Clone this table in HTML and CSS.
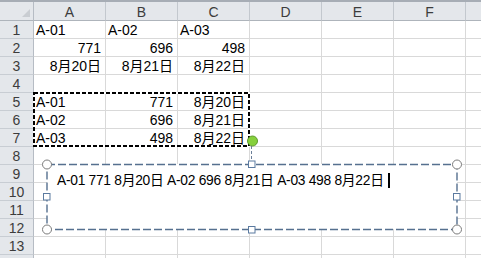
FILE: index.html
```html
<!DOCTYPE html>
<html lang="ja">
<head>
<meta charset="utf-8">
<link rel="stylesheet" href="styles.css">
</head>
<body>
<div class="sheet">
  <div class="topbar"></div>
  <div class="row head">
    <div class="rh corner"><span class="tri"></span></div>
    <div class="c">A</div><div class="c">B</div><div class="c">C</div><div class="c">D</div><div class="c">E</div><div class="c">F</div><div class="c"></div>
  </div>
  <div class="row"><div class="rh">1</div><div class="c">A-01</div><div class="c">A-02</div><div class="c">A-03</div><div class="c"></div><div class="c"></div><div class="c"></div><div class="c"></div></div>
  <div class="row"><div class="rh">2</div><div class="c r">771</div><div class="c r">696</div><div class="c r">498</div><div class="c"></div><div class="c"></div><div class="c"></div><div class="c"></div></div>
  <div class="row"><div class="rh">3</div><div class="c r">8月20日</div><div class="c r">8月21日</div><div class="c r">8月22日</div><div class="c"></div><div class="c"></div><div class="c"></div><div class="c"></div></div>
  <div class="row"><div class="rh">4</div><div class="c"></div><div class="c"></div><div class="c"></div><div class="c"></div><div class="c"></div><div class="c"></div><div class="c"></div></div>
  <div class="row"><div class="rh">5</div><div class="c">A-01</div><div class="c r">771</div><div class="c r">8月20日</div><div class="c"></div><div class="c"></div><div class="c"></div><div class="c"></div></div>
  <div class="row"><div class="rh">6</div><div class="c">A-02</div><div class="c r">696</div><div class="c r">8月21日</div><div class="c"></div><div class="c"></div><div class="c"></div><div class="c"></div></div>
  <div class="row"><div class="rh">7</div><div class="c">A-03</div><div class="c r">498</div><div class="c r">8月22日</div><div class="c"></div><div class="c"></div><div class="c"></div><div class="c"></div></div>
  <div class="row"><div class="rh">8</div><div class="c"></div><div class="c"></div><div class="c"></div><div class="c"></div><div class="c"></div><div class="c"></div><div class="c"></div></div>
  <div class="row"><div class="rh">9</div><div class="c"></div><div class="c"></div><div class="c"></div><div class="c"></div><div class="c"></div><div class="c"></div><div class="c"></div></div>
  <div class="row"><div class="rh">10</div><div class="c"></div><div class="c"></div><div class="c"></div><div class="c"></div><div class="c"></div><div class="c"></div><div class="c"></div></div>
  <div class="row"><div class="rh">11</div><div class="c"></div><div class="c"></div><div class="c"></div><div class="c"></div><div class="c"></div><div class="c"></div><div class="c"></div></div>
  <div class="row"><div class="rh">12</div><div class="c"></div><div class="c"></div><div class="c"></div><div class="c"></div><div class="c"></div><div class="c"></div><div class="c"></div></div>
  <div class="row"><div class="rh">13</div><div class="c"></div><div class="c"></div><div class="c"></div><div class="c"></div><div class="c"></div><div class="c"></div><div class="c"></div></div>
  <div class="row"><div class="rh"></div><div class="c"></div><div class="c"></div><div class="c"></div><div class="c"></div><div class="c"></div><div class="c"></div><div class="c"></div></div>

  <div class="textbox">A-01 771 8月20日 A-02 696 8月21日 A-03 498 8月22日 <span class="caret"></span></div>

  <svg class="overlay" width="481" height="258" viewBox="0 0 481 258">
    <rect x="34" y="93" width="215" height="53" fill="none" stroke="#ffffff" stroke-width="2"/>
    <rect x="34" y="93" width="215" height="53" fill="none" stroke="#000000" stroke-width="2" stroke-dasharray="4 2"/>
    <line x1="251.5" y1="146" x2="251.5" y2="160" stroke="#6b7f99" stroke-width="1" stroke-dasharray="3 2"/>
    <rect x="47" y="164.5" width="410" height="65" fill="none" stroke="#56708f" stroke-width="1.4" stroke-dasharray="8 3"/>
    <circle cx="47" cy="164.5" r="4.5" fill="#fff" stroke="#7b7b7b"/>
    <circle cx="457" cy="164.5" r="4.5" fill="#fff" stroke="#7b7b7b"/>
    <circle cx="47" cy="229.5" r="4.5" fill="#fff" stroke="#7b7b7b"/>
    <circle cx="457" cy="229.5" r="4.5" fill="#fff" stroke="#7b7b7b"/>
    <rect x="248.5" y="161" width="6.5" height="6.5" fill="#fff" stroke="#5b7aa0"/>
    <rect x="248.5" y="226.5" width="6.5" height="6.5" fill="#fff" stroke="#5b7aa0"/>
    <rect x="43.5" y="193.5" width="6.5" height="6.5" fill="#fff" stroke="#5b7aa0"/>
    <rect x="453.5" y="193.5" width="6.5" height="6.5" fill="#fff" stroke="#5b7aa0"/>
    <circle cx="252.5" cy="141" r="5" fill="#86d03c" stroke="#5f9a2e"/>
  </svg>
</div>
</body>
</html>
```
FILE: styles.css
```css
html, body {
  margin: 0;
  padding: 0;
}
body {
  width: 481px;
  height: 258px;
  overflow: hidden;
  background: #ffffff;
  font-family: "Liberation Sans", "Noto Sans CJK JP", sans-serif;
}
.sheet {
  position: relative;
  width: 481px;
  height: 258px;
  overflow: hidden;
}
.topbar {
  height: 2px;
  background: #a7adb5;
}
.row {
  display: flex;
  height: 18px;
}
.row.head {
  height: 19px;
}
.c {
  flex: none;
  width: 72px;
  box-sizing: border-box;
  border-right: 1px solid #d9d9d9;
  border-bottom: 1px solid #d9d9d9;
  font-size: 14px;
  line-height: 17px;
  padding: 1px 4px 0 2px;
  white-space: nowrap;
  color: #000;
}
.c.r {
  text-align: right;
}
.rh {
  flex: none;
  width: 34px;
  box-sizing: border-box;
  background: #e4e7eb;
  border-right: 1px solid #b6bcc4;
  border-bottom: 1px solid #c8cdd3;
  text-align: center;
  font-size: 14px;
  line-height: 17px;
  padding-top: 1px;
  color: #3c3c3c;
}
.head .c {
  background: #e4e7eb;
  border-right: 1px solid #c3c8ce;
  border-bottom: 1px solid #aeb4bb;
  text-align: center;
  color: #3c3c3c;
  line-height: 18px;
  padding: 1px 0 0;
}
.head .rh {
  border-bottom: 1px solid #aeb4bb;
}
.corner {
  position: relative;
}
.tri {
  position: absolute;
  right: 3px;
  bottom: 3px;
  width: 0;
  height: 0;
  border-left: 8px solid transparent;
  border-bottom: 8px solid #c9cdd2;
}
.textbox {
  position: absolute;
  left: 47px;
  top: 164px;
  width: 410px;
  height: 65px;
  box-sizing: border-box;
  background: #ffffff;
  padding: 8px 0 0 10px;
  font-family: "Liberation Sans", "Noto Sans CJK JP", sans-serif;
  font-size: 13.8px;
  line-height: 18px;
  letter-spacing: -0.28px;
  white-space: nowrap;
  color: #000;
}
.caret {
  display: inline-block;
  width: 1.5px;
  height: 15px;
  background: #000;
  vertical-align: -3px;
  margin-left: 1px;
}
.overlay {
  position: absolute;
  left: 0;
  top: 0;
  pointer-events: none;
}
```
